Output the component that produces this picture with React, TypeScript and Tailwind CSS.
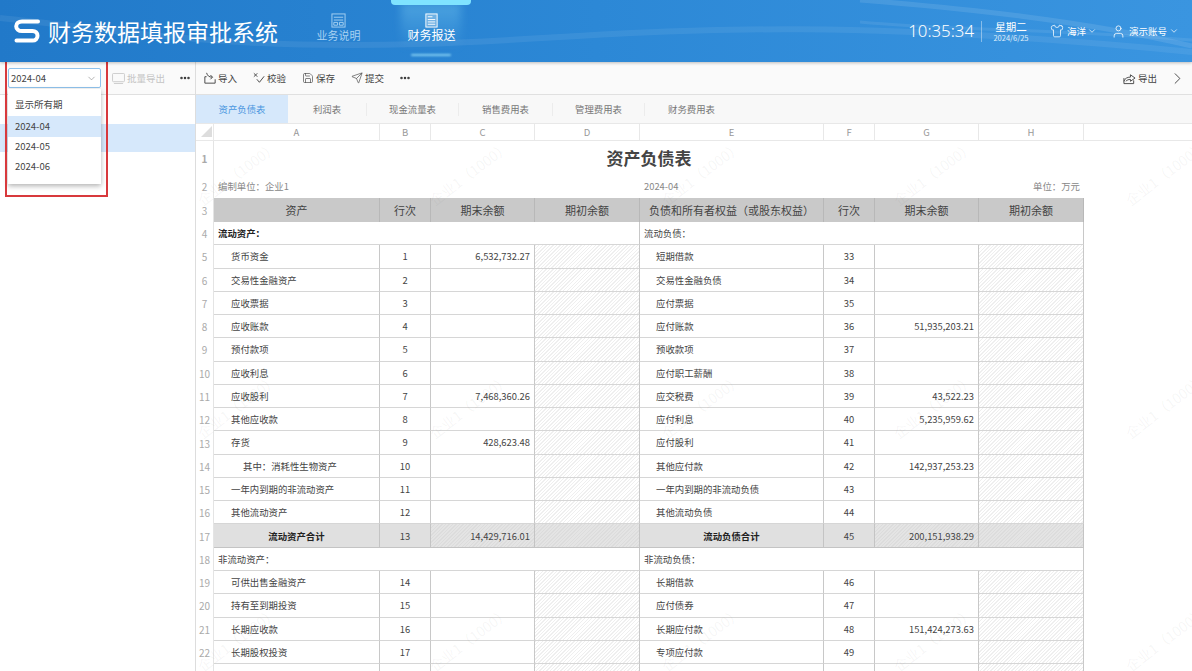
import { ChevronDown, ChevronRight, MoreHorizontal, Save, Send, Shirt, User } from 'lucide-react';

type Row = {
    n?: number;
    left: string;
    li?: boolean;
    la?: number;
    c?: string;
    right: string;
    rb?: number;
    g?: string;
};

const cols = 'grid grid-cols-[18px_166px_51px_104px_105px_184px_51px_104px_105px_1fr]';
const hatch = 'bg-[repeating-linear-gradient(135deg,#efefef_0,#efefef_1px,#ffffff_1px,#ffffff_2.5px)]';
const hatchGray = 'bg-[repeating-linear-gradient(135deg,#dcdcdc_0,#dcdcdc_1px,#e4e4e4_1px,#e4e4e4_2.5px)]';

const rows: Row[] = [
    { n: 5, left: '货币资金', la: 1, c: '6,532,732.27', right: '短期借款', rb: 33 },
    { n: 6, left: '交易性金融资产', la: 2, right: '交易性金融负债', rb: 34 },
    { n: 7, left: '应收票据', la: 3, right: '应付票据', rb: 35 },
    { n: 8, left: '应收账款', la: 4, right: '应付账款', rb: 36, g: '51,935,203.21' },
    { n: 9, left: '预付款项', la: 5, right: '预收款项', rb: 37 },
    { n: 10, left: '应收利息', la: 6, right: '应付职工薪酬', rb: 38 },
    { n: 11, left: '应收股利', la: 7, c: '7,468,360.26', right: '应交税费', rb: 39, g: '43,522.23' },
    { n: 12, left: '其他应收款', la: 8, right: '应付利息', rb: 40, g: '5,235,959.62' },
    { n: 13, left: '存货', la: 9, c: '428,623.48', right: '应付股利', rb: 41 },
    { n: 14, left: '其中：消耗性生物资产', li: true, la: 10, right: '其他应付款', rb: 42, g: '142,937,253.23' },
    { n: 15, left: '一年内到期的非流动资产', la: 11, right: '一年内到期的非流动负债', rb: 43 },
    { n: 16, left: '其他流动资产', la: 12, right: '其他流动负债', rb: 44 },
];

const rows2: Row[] = [
    { n: 19, left: '可供出售金融资产', la: 14, right: '长期借款', rb: 46 },
    { n: 20, left: '持有至到期投资', la: 15, right: '应付债券', rb: 47 },
    { n: 21, left: '长期应收款', la: 16, right: '长期应付款', rb: 48, g: '151,424,273.63' },
    { n: 22, left: '长期股权投资', la: 17, right: '专项应付款', rb: 49 },
];

const line = 'border-r border-b border-r-[#c8c8c8] border-b-[#d6d6d6]';

function RowNum({ n }: { n?: number }) {
    return <div className="flex items-center justify-center border-r border-[#e4e4e4] text-[10px] text-[#aaaaaa]">{n}</div>;
}

function DataRow({ row }: { row: Row }) {
    return (
        <div className={`${cols} h-[23.28px] text-[9.4px] text-[#444444]`}>
            <RowNum n={row.n} />
            <div className={`${line} flex items-center ${row.li ? 'pl-[29px]' : 'pl-[17px]'}`}>{row.left}</div>
            <div className={`${line} flex items-center justify-center`}>{row.la}</div>
            <div className={`${line} flex items-center justify-end pr-[4px]`}>{row.c}</div>
            <div className={`${line} ${hatch}`} />
            <div className={`${line} flex items-center pl-[16px]`}>{row.right}</div>
            <div className={`${line} flex items-center justify-center`}>{row.rb}</div>
            <div className={`${line} flex items-center justify-end pr-[4px]`}>{row.g}</div>
            <div className={`${line} ${hatch}`} />
        </div>
    );
}

function SectionRow({ n, left, right, bold }: { n: number; left: string; right: string; bold?: boolean }) {
    return (
        <div className={`${cols} h-[23.28px] text-[9.4px] text-[#444444]`}>
            <RowNum n={n} />
            <div className={`${line} col-span-4 flex items-center pl-[4px] ${bold ? 'font-bold text-[#222222]' : ''}`}>{left}</div>
            <div className={`${line} col-span-4 flex items-center pl-[4px]`}>{right}</div>
        </div>
    );
}

function TotalRow({ n, left, la, c, right, rb, g }: { n: number; left: string; la: number; c: string; right: string; rb: number; g: string }) {
    const cell = 'border-r border-b border-[#c4c4c4]';
    return (
        <div className={`${cols} h-[23.28px] text-[9.4px] text-[#444444]`}>
            <RowNum n={n} />
            <div className={`${cell} bg-[#e0e0e0] flex items-center justify-center font-bold text-[#222222]`}>{left}</div>
            <div className={`${cell} bg-[#e0e0e0] flex items-center justify-center`}>{la}</div>
            <div className={`${cell} ${hatchGray} flex items-center justify-end pr-[4px]`}>{c}</div>
            <div className={`${cell} ${hatchGray}`} />
            <div className={`${cell} bg-[#e0e0e0] flex items-center justify-center font-bold text-[#222222]`}>{right}</div>
            <div className={`${cell} bg-[#e0e0e0] flex items-center justify-center`}>{rb}</div>
            <div className={`${cell} ${hatchGray} flex items-center justify-end pr-[4px]`}>{g}</div>
            <div className={`${cell} ${hatchGray}`} />
        </div>
    );
}

function Logo() {
    return (
        <svg viewBox="0 0 26 24" className="h-[24px] w-[26px]" fill="none" stroke="#ffffff" strokeWidth="4" strokeLinecap="round">
            <path d="M24 2.500H8C4.500 2.500 2.200 4.500 2.200 7.200S4.500 12 8 12h10.500c3 0 5 1.800 5 4.700s-2 4.800-5 4.800H2.500" />
        </svg>
    );
}

function ImportIcon() {
    return (
        <svg viewBox="0 0 14 14" className="h-[12px] w-[12px]" fill="none" stroke="#444444" strokeWidth="1.1">
            <path d="M3 5.500H1v7.500h12V8.500" />
            <path d="M3 1c1 3.500 3 5 6.500 5M7.500 3.500 10 6 7.500 8.500" />
        </svg>
    );
}

function CheckIcon() {
    return (
        <svg viewBox="0 0 14 14" className="h-[12px] w-[12px]" fill="none" stroke="#444444" strokeWidth="1.1">
            <path d="M1 1.500 5 5.500M5 1.500 1 5.500" />
            <path d="M4.500 8.500 7.500 12 13 5" />
        </svg>
    );
}

function ExportIcon() {
    return (
        <svg viewBox="0 0 14 14" className="h-[13px] w-[13px]" fill="none" stroke="#444444" strokeWidth="1">
            <path d="M1 6.500v6h10.500V9" />
            <path d="M1 10c1-3 3.500-4.500 7-4.500V3l5 3.500L8 10V8c-2 0-3.500.500-5 2" />
        </svg>
    );
}

function ToolButton({ icon, label, className }: { icon: React.ReactNode; label: string; className?: string }) {
    return (
        <div className={`flex items-center gap-[2px] text-[9.5px] text-[#444444] ${className ?? ''}`}>
            {icon}
            <span>{label}</span>
        </div>
    );
}

const tabs = [
    { label: '资产负债表', w: 'w-[92px]' },
    { label: '利润表', w: 'w-[79px]' },
    { label: '现金流量表', w: 'w-[92px]' },
    { label: '销售费用表', w: 'w-[94px]' },
    { label: '管理费用表', w: 'w-[92px]' },
    { label: '财务费用表', w: 'w-[93px]' },
];

export default function App() {
    return (
        <div className="relative flex h-[671px] w-[1192px] flex-col overflow-hidden bg-white font-['Noto_Sans_CJK_SC','Noto_Sans',sans-serif]">
            {/* Header */}
            <header className="relative z-10 flex h-[62px] shrink-0 items-center overflow-hidden bg-gradient-to-r from-[#2179c9] via-[#2c88d6] to-[#3a95e0] shadow-[0_1px_3px_rgba(0,0,0,0.25)]">
                <svg viewBox="0 0 1192 62" className="absolute inset-0 h-full w-full" fill="none" stroke="#ffffff">
                    <path d="M0 18C120 30 220 50 420 44S760 10 1192 52" strokeOpacity="0.07" strokeWidth="6" />
                    <path d="M860 0C960 8 1080 20 1192 46" strokeOpacity="0.1" strokeWidth="5" />
                    <path d="M860 22C940 30 1040 28 1192 40" strokeOpacity="0.08" strokeWidth="3" />
                </svg>
                <div className="relative ml-[14px]">
                    <Logo />
                </div>
                <h1 className="relative ml-[8px] w-[238px] whitespace-nowrap text-[23px] font-normal text-white">财务数据填报审批系统</h1>
                <nav className="relative ml-[6px] flex h-full">
                    <div className="flex w-[93px] flex-col items-center pt-[13px] text-[#a9d2f2]">
                        <svg viewBox="0 0 16 16" className="h-[15px] w-[15px]" fill="none" stroke="#a9d2f2" strokeWidth="1">
                            <rect x="1" y="1" width="14" height="14" />
                            <path d="M3 4.500h10M3 7.500h10M3 10h4v3H3zM9 10h4v3H9z" />
                        </svg>
                        <span className="text-[11px] leading-[14px]">业务说明</span>
                    </div>
                    <div className="relative flex w-[93px] flex-col items-center pt-[13px] text-white">
                        <div className="absolute left-[16px] top-[3px] h-[46px] w-[60px] bg-gradient-to-b from-[#9be8ff]/30 to-transparent blur-[4px]" />
                        <div className="absolute left-[6px] top-0 h-[5px] w-[80px] rounded-b-[4px] bg-[#7fe3ff]" />
                        <svg viewBox="0 0 16 16" className="relative h-[15px] w-[15px]" fill="none" stroke="#ffffff" strokeWidth="1">
                            <rect x="2" y="1" width="12" height="14" fill="#ffffff" fillOpacity="0.25" />
                            <path d="M4 4h5M4 7h8M4 9.500h8M4 12h8" />
                        </svg>
                        <span className="relative text-[12px] leading-[14px]">财务报送</span>
                        <div className="absolute bottom-[6px] left-[26px] h-[2px] w-[40px] rounded-full bg-[#a8ecff]/70 blur-[1px]" />
                    </div>
                </nav>
                <div className="relative ml-auto flex items-center pr-[13px] text-white">
                    <span className="text-[16.8px] leading-none font-['Noto_Sans',sans-serif] font-light">10:35:34</span>
                    <div className="ml-[7px] h-[21px] w-px bg-white/40" />
                    <div className="ml-[12px] flex w-[34px] flex-col items-center whitespace-nowrap">
                        <span className="text-[10.5px] leading-[12px]">星期二</span>
                        <span className="text-[7.5px] leading-[9px] text-[#dcecfa]">2024/6/25</span>
                    </div>
                    <Shirt className="ml-[22px] h-[14px] w-[14px]" strokeWidth={1.3} />
                    <span className="ml-[3px] text-[9.5px]">海洋</span>
                    <ChevronDown className="ml-[1px] h-[10px] w-[10px]" strokeWidth={1.7} />
                    <User className="ml-[14px] h-[15px] w-[15px]" strokeWidth={1.3} />
                    <span className="ml-[3px] text-[9.500px]">演示账号</span>
                    <ChevronDown className="ml-[2px] h-[10px] w-[10px]" strokeWidth={1.7} />
                </div>
            </header>

            <div className="flex min-h-0 flex-1">
                {/* Left panel */}
                <aside className="relative w-[196px] shrink-0 border-r border-[#dddddd]">
                    <div className="flex h-[33px] items-center border-b border-[#e0e0e0] bg-[#fafafa] pl-[8px]">
                        <div className="flex h-[20px] w-[93px] items-center justify-between rounded-[2px] border border-[#8fc2ec] bg-white pl-[2px] pr-[3px] text-[9.5px] text-[#444444]">
                            2024-04
                            <ChevronDown className="h-[11px] w-[11px] text-[#777777]" strokeWidth={1.2} />
                        </div>
                        <div className="ml-[11px] flex items-center gap-[2px] text-[9.5px] text-[#c4c4c4]">
                            <svg viewBox="0 0 14 12" className="h-[11px] w-[13px]" fill="none" stroke="#c8c8c8" strokeWidth="1">
                                <rect x="0.500" y="0.500" width="13" height="9" rx="1" />
                                <path d="M2 11.500h10" />
                            </svg>
                            批量导出
                        </div>
                        <MoreHorizontal className="ml-[14px] h-[12px] w-[12px] text-[#333333]" strokeWidth={3} />
                    </div>
                    <div className="mt-[29px] h-[28px] bg-[#d6e8fb]" />

                    {/* Open period list */}
                    <div className="absolute left-[8px] top-[27px] flex h-[95px] w-[93px] flex-col bg-white pt-[6px] text-[9.5px] text-[#444444] shadow-[0_2px_5px_rgba(0,0,0,0.3)]">
                        <div className="flex h-[21px] items-center pb-[2px] pl-[7px]">显示所有期</div>
                        <div className="flex h-[20.500px] items-center bg-[#d6e8fb] pl-[7px]">2024-04</div>
                        <div className="flex h-[20px] items-center pl-[7px]">2024-05</div>
                        <div className="flex h-[20px] items-center pl-[7px]">2024-06</div>
                    </div>
                    <div className="absolute left-[5px] top-[-2px] h-[137px] w-[103px] border-2 border-[#d8393c]" />
                </aside>

                {/* Report */}
                <main className="relative flex min-w-0 flex-1 flex-col overflow-hidden">
                    <div className="flex h-[33px] shrink-0 items-center border-b border-[#e0e0e0] bg-[#fafafa] pl-[8px] pr-[5px]">
                        <ToolButton icon={<ImportIcon />} label="导入" />
                        <ToolButton icon={<CheckIcon />} label="校验" className="ml-[16px]" />
                        <ToolButton icon={<Save className="h-[12px] w-[12px]" strokeWidth={1.3} />} label="保存" className="ml-[16px]" />
                        <ToolButton icon={<Send className="h-[12px] w-[12px]" strokeWidth={1.3} />} label="提交" className="ml-[16px]" />
                        <MoreHorizontal className="ml-[15px] h-[12px] w-[12px] text-[#333333]" strokeWidth={3} />
                        <ToolButton icon={<ExportIcon />} label="导出" className="ml-auto" />
                        <ChevronRight className="ml-[11px] h-[19px] w-[19px] text-[#444444]" strokeWidth={1.2} />
                    </div>
                    <div className="flex h-[29px] shrink-0 border-b border-[#e8e8e8] bg-[#f8f8f8] text-[9.400px] text-[#777777]">
                        {tabs.map((tab, i) => (
                            <div key={tab.label} className={`${tab.w} flex items-center justify-center ${i === 0 ? 'bg-[#d6e8fb] text-[#4a97e0]' : ''}`}>
                                <span className={`flex h-[13px] w-full items-center justify-center ${i > 0 && i < 5 ? 'border-r border-[#ececec]' : ''}`}>{tab.label}</span>
                            </div>
                        ))}
                    </div>

                    <div className="relative flex-1 overflow-hidden">
                        <div className={`${cols} h-[17px] border-b border-[#e8e8e8] text-[9.500px] text-[#999999]`}>
                            <div className="relative border-r border-[#e8e8e8]">
                                <div className="absolute bottom-[3px] right-[1px] h-0 w-0 border-b-[11px] border-l-[11px] border-b-[#dddddd] border-l-transparent" />
                            </div>
                            {['A', 'B', 'C', 'D', 'E', 'F', 'G', 'H'].map((c) => (
                                <div key={c} className="flex items-center justify-center border-r border-[#e8e8e8]">{c}</div>
                            ))}
                        </div>

                        <div className={`${cols} h-[34px] text-[17px] font-bold text-[#444444]`}>
                            <RowNum n={1} />
                            <div className="col-span-8 flex items-center justify-center">资产负债表</div>
                        </div>
                        <div className={`${cols} h-[23px] text-[9.400px] text-[#888888]`}>
                            <RowNum n={2} />
                            <div className="col-span-4 flex items-center pl-[4px]">编制单位：企业1</div>
                            <div className="flex items-center pl-[4px]">2024-04</div>
                            <div className="col-span-3 flex items-center justify-end pr-[4px]">单位：万元</div>
                        </div>
                        <div className={`${cols} h-[24px] text-[11px] text-[#444444]`}>
                            <RowNum n={3} />
                            {['资产', '行次', '期末余额', '期初余额', '负债和所有者权益（或股东权益）', '行次', '期末余额', '期初余额'].map((t, i) => (
                                <div key={i} className="flex items-center justify-center whitespace-nowrap border-r border-[#b8b8b8] bg-[#c9c9c9]">{t}</div>
                            ))}
                        </div>

                        <SectionRow n={4} left="流动资产：" right="流动负债：" bold />
                        {rows.map((row) => <DataRow key={row.n} row={row} />)}
                        <TotalRow n={17} left="流动资产合计" la={13} c="14,429,716.01" right="流动负债合计" rb={45} g="200,151,938.29" />
                        <SectionRow n={18} left="非流动资产：" right="非流动负债：" />
                        {rows2.map((row) => <DataRow key={row.n} row={row} />)}
                        <DataRow row={{ left: '', right: '' }} />

                        {/* Watermark */}
                        <div className="pointer-events-none absolute left-[-75px] top-[-67px] flex w-[1392px] flex-wrap">
                            {Array.from({ length: 18 }).map((_, i) => (
                                <div key={i} className="flex h-[233px] w-[232px] items-center justify-center">
                                    <span className="rotate-[-37deg] whitespace-nowrap text-[14px] text-[#888888]/[0.08]">企业1（1000）</span>
                                </div>
                            ))}
                        </div>
                    </div>
                </main>
            </div>
        </div>
    );
}
